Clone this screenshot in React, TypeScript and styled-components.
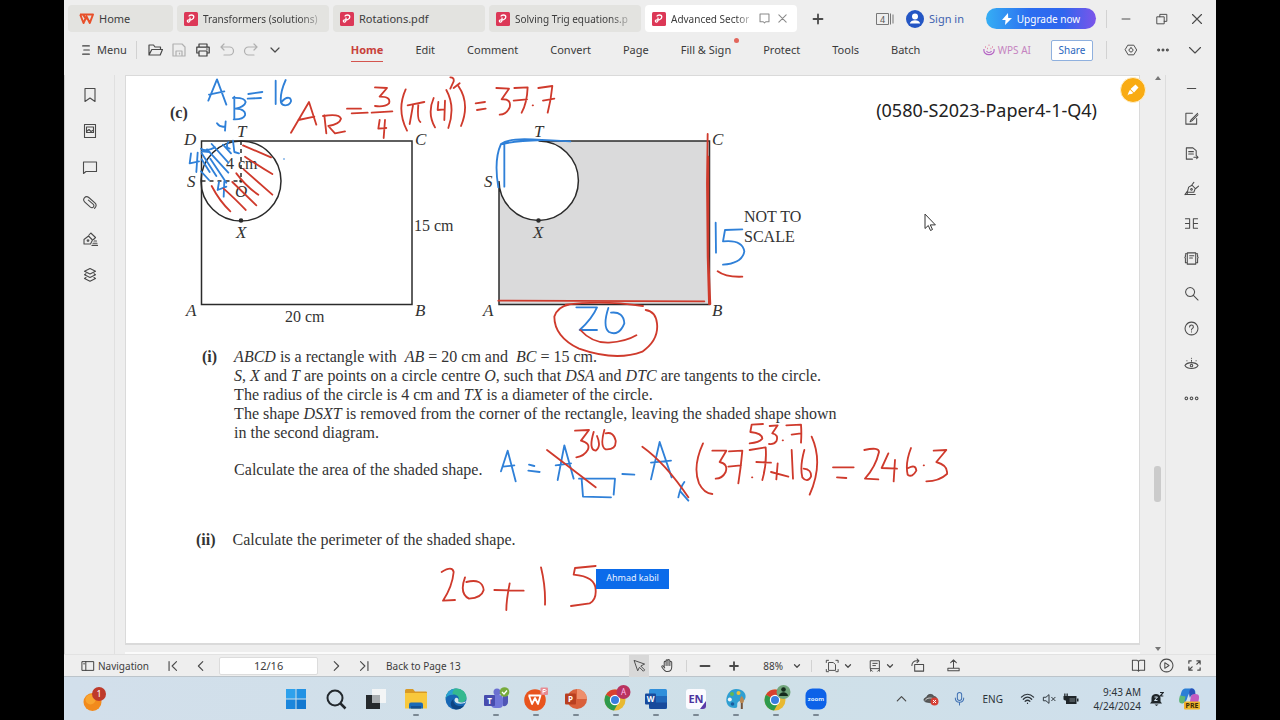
import React from "react";
import styled, { createGlobalStyle, css } from "styled-components";

const UI = `"Noto Sans", "Open Sans", sans-serif`;
const SERIF = `"Liberation Serif", "Times New Roman", serif`;
const BLUE = "#2f80d8";
const RED = "#cf3a2c";

const GlobalStyle = createGlobalStyle`
  *, *::before, *::after { box-sizing: border-box; }
  body { margin: 0; background: #000; font-family: ${UI}; font-size: 11px; color: #3c3c3c; }
  button, input { font: inherit; color: inherit; }
  a { color: inherit; text-decoration: none; }
  svg { display: block; flex: none; }
`;

/* ---------- shell ---------- */

const Screen = styled.div`
  min-height: 100vh;
  padding: 0 5%;
  display: flex;
`;

const Desktop = styled.div`
  flex: 1;
  min-width: 0;
  display: flex;
  flex-direction: column;
  background: #eeeeee;
  overflow: hidden;
`;

const Spacer = styled.div`
  flex: 1;
`;

const Divider = styled.span<{ $tall?: boolean }>`
  width: 1px;
  height: ${(p) => (p.$tall ? 18 : 12)}px;
  background: #d2d2d2;
`;

const IconButton = styled.button<{ $w?: number; $active?: boolean; $tone?: string }>`
  width: ${(p) => p.$w ?? 24}px;
  height: 22px;
  padding: 0;
  border: 0;
  flex: none;
  display: flex;
  align-items: center;
  justify-content: center;
  background: ${(p) => (p.$active ? "#d8d8d8" : "transparent")};
  color: ${(p) => p.$tone ?? "#4a4a4a"};
`;

/* ---------- tab strip ---------- */

const TabStrip = styled.header`
  display: flex;
  align-items: center;
  height: 37px;
  padding: 0 1px 0 4px;
`;

const Tabs = styled.nav`
  display: flex;
  gap: 4px;
`;

const Tab = styled.div<{ $w: number; $active?: boolean }>`
  display: flex;
  align-items: center;
  width: ${(p) => p.$w}px;
  height: 27px;
  border-radius: 4px;
  background: ${(p) => (p.$active ? "#ffffff" : "#e3e3e0")};
`;

const TabLink = styled.a<{ $lead: number }>`
  flex: 1;
  min-width: 0;
  display: flex;
  align-items: center;
  gap: 5px;
  padding: 0 0 0 ${(p) => p.$lead}px;
`;

const TabTitle = styled.span<{ $fade?: boolean }>`
  white-space: nowrap;
  font-size: ${(p) => (p.$fade ? 10 : 11)}px;
  line-height: 16px;
  ${(p) =>
    p.$fade &&
    css`
      mask-image: linear-gradient(to right, #000 84%, rgba(0, 0, 0, 0.3));
    `}
`;

const Account = styled.a`
  display: flex;
  align-items: center;
  gap: 5px;
  margin: 0 22px 0 11px;
  color: #3f62ae;
  line-height: 16px;
`;

const UpgradeButton = styled.button`
  display: flex;
  align-items: center;
  justify-content: center;
  gap: 5px;
  width: 110px;
  height: 21px;
  margin-right: 10px;
  padding: 0;
  border: 0;
  border-radius: 11px;
  color: #fff;
  font-size: 10px;
  background: linear-gradient(90deg, #35aef4 0%, #2b6df0 40%, #2f66ee 70%, #7c55ea 100%);
`;

/* ---------- ribbon ---------- */

const Ribbon = styled.div`
  display: flex;
  align-items: center;
  height: 34px;
  margin-top: -4px;
  padding: 0 5px 0 16px;
`;

const MenuButton = styled.button`
  display: flex;
  align-items: center;
  gap: 5px;
  margin-right: 9px;
  padding: 0;
  border: 0;
  background: none;
  line-height: 16px;
`;

const QuickTools = styled.div`
  display: flex;
  margin-left: 6px;
`;

const RibbonTabs = styled.nav`
  display: flex;
  gap: 32px;
  margin-left: 64px;
`;

const RibbonTab = styled.a<{ $active?: boolean; $dot?: boolean }>`
  position: relative;
  padding: 4px 0 3px;
  line-height: 16px;
  white-space: nowrap;
  font-weight: ${(p) => (p.$active ? 700 : 400)};
  color: ${(p) => (p.$active ? "#c8413b" : "#3a3a3a")};
  border-bottom: 1px solid ${(p) => (p.$active ? "#d4544e" : "transparent")};
  ${(p) =>
    p.$dot &&
    css`
      &::after {
        content: "";
        position: absolute;
        top: 0;
        right: -8px;
        width: 5px;
        height: 5px;
        border-radius: 50%;
        background: #e2665c;
      }
    `}
`;

const AiLink = styled.a`
  display: flex;
  align-items: center;
  gap: 3px;
  margin-right: 20px;
  font-size: 10px;
  color: #c583c0;
`;

const ShareButton = styled.button`
  width: 42px;
  height: 21px;
  margin-right: 13px;
  padding: 0;
  border: 1px solid #8fb0de;
  border-radius: 2px;
  background: #fff;
  color: #2a66bd;
  font-size: 10px;
`;

/* ---------- workspace ---------- */

const Workspace = styled.main`
  flex: 1;
  display: flex;
  margin-top: 8px;
`;

const LeftRail = styled.nav`
  width: 51px;
  padding-top: 9px;
  display: flex;
  flex-direction: column;
  align-items: center;
  gap: 14px;
  border-left: 1px solid #cfcfcf;
  border-right: 1px solid #e0e0e0;
`;

const RightRail = styled.nav`
  width: 51px;
  padding-top: 2px;
  display: flex;
  flex-direction: column;
  align-items: center;
  gap: 13px;
  border-left: 1px solid #dddddd;

  & > :first-child {
    margin-bottom: -5px;
  }
`;

const Viewport = styled.div`
  flex: 1;
  min-width: 0;
  display: flex;
  flex-direction: column;
  padding-left: 10px;
`;

const Sheet = styled.article`
  position: relative;
  flex: 1;
  padding: 25px 42px 8px 44px;
  background: #fff;
  border: solid #dadada;
  border-width: 1px 1px 2px;
  color: #333;
  font-family: ${SERIF};
  font-size: 16px;
  line-height: 19px;
`;

const NextSheet = styled.div`
  height: 2px;
  margin-top: 7px;
  background: #fbfbfb;
`;

const ScrollTrack = styled.div`
  width: 25px;
  padding: 1px 4px 3px 14px;
  display: grid;
  grid-template-rows: 4px 385fr 36px 145fr 4px;
  justify-items: center;
`;

const ScrollThumb = styled.span`
  grid-row: 3;
  width: 7px;
  border-radius: 3px;
  background: #cbcbcb;
`;

const ScrollArrow = styled.span<{ $down?: boolean }>`
  grid-row: ${(p) => (p.$down ? 5 : 1)};
  border: 3px solid transparent;
  border-top: ${(p) => (p.$down ? "4px solid #777" : "0")};
  border-bottom: ${(p) => (p.$down ? "0" : "4px solid #777")};
  width: 0;
  height: 4px;
`;

/* ---------- exam paper ---------- */

const PaperHead = styled.div`
  display: flex;
  justify-content: space-between;
  align-items: center;
  height: 22px;
`;

const PartLabel = styled.strong`
  font-weight: 700;
`;

const PaperRef = styled.span`
  font-family: ${UI};
  font-size: 18px;
  line-height: 18px;
  padding-bottom: 4px;
  color: #222;
`;

const Figures = styled.div`
  display: flex;
  gap: 16px;
  padding-left: 13px;
`;

const ScaleNote = styled.p`
  margin: 84px 0 0;
  line-height: 20px;
`;

const SubPart = styled.section<{ $lead: number; $top: number }>`
  display: flex;
  gap: 17px;
  margin: ${(p) => p.$top}px 0 0 ${(p) => p.$lead}px;
  white-space: nowrap;
`;

const Paragraph = styled.p`
  margin: 0 0 18px;
`;

const InkLayer = styled.svg`
  position: absolute;
  left: -1px;
  top: -1px;
  pointer-events: none;
`;

const NameTag = styled.span`
  position: absolute;
  left: 470px;
  top: 493px;
  width: 73px;
  height: 20px;
  background: #0b6bea;
  color: #e8f1ff;
  font-family: ${UI};
  font-size: 9px;
  line-height: 18px;
  text-align: center;
`;

const HighlighterButton = styled.button`
  position: absolute;
  top: 1px;
  right: -7px;
  width: 26px;
  height: 26px;
  padding: 0;
  border: 1px solid #fff0cc;
  border-radius: 50%;
  display: flex;
  align-items: center;
  justify-content: center;
  background: #f9ab12;
`;

/* ---------- status bar ---------- */

const StatusBar = styled.footer`
  display: flex;
  align-items: center;
  height: 23px;
  padding: 0 8px 0 17px;
  border-top: 1px solid #e2e2e2;
  border-bottom: 1px solid #bcc4ca;
  font-size: 10px;
  white-space: nowrap;
`;

const StatusButton = styled.button`
  display: flex;
  align-items: center;
  gap: 3px;
  padding: 0;
  border: 0;
  background: none;
`;

const PageInput = styled.input`
  width: 99px;
  height: 18px;
  margin: 0 4px;
  padding: 0;
  border: 1px solid #dcdcdc;
  border-radius: 2px;
  background: #fff;
  font-size: 11px;
  text-align: center;
`;

const Group = styled.div<{ $left?: number; $right?: number }>`
  display: flex;
  align-items: center;
  margin-left: ${(p) => p.$left ?? 0}px;
  margin-right: ${(p) => p.$right ?? 0}px;
`;

/* ---------- taskbar ---------- */

const Taskbar = styled.footer`
  display: flex;
  align-items: center;
  height: 43px;
  background: linear-gradient(90deg, #d2dfeb, #cfe0e8 60%, #cfdfec);
`;

const TaskStart = styled.div`
  flex: 195 1 0;
  padding-left: 17px;
`;

const TaskApps = styled.div`
  display: flex;
`;

const TaskButton = styled.button<{ $open?: boolean }>`
  position: relative;
  display: flex;
  align-items: center;
  justify-content: center;
  width: 40px;
  height: 40px;
  padding: 0;
  border: 0;
  background: none;
  ${(p) =>
    p.$open &&
    css`
      &::after {
        content: "";
        position: absolute;
        bottom: 3px;
        width: 6px;
        height: 2px;
        border-radius: 1px;
        background: #7a8893;
      }
    `}
`;

const Tray = styled.div`
  flex: 365 1 0;
  display: flex;
  align-items: center;
  justify-content: flex-end;
  padding-right: 15px;
  color: #2c3339;
`;

const Language = styled.span`
  margin: 0 13px 0 9px;
  font-size: 10px;
`;

const Clock = styled.time`
  margin: 0 8px 0 7px;
  width: 52px;
  text-align: right;
  font-size: 10px;
  line-height: 14px;
  white-space: nowrap;
`;

/* ---------- icons ---------- */

type GlyphProps = { d: string; size?: number; w?: number; fill?: string };

const Glyph = ({ d, size = 16, w = 1.1, fill = "none" }: GlyphProps) => (
  <svg width={size} height={size} viewBox="0 0 16 16" fill={fill} stroke="currentColor" strokeWidth={w} strokeLinejoin="round" strokeLinecap="round" aria-hidden>
    <path d={d} />
  </svg>
);

const icons = {
  bars: "M3.500 2.500h9M5 8h7.500M3.500 13.500h9",
  folder: "M2 13V3h4.500l1.500 2h5.500v2.500M2 13l2.800-5.500H15.500L13.200 13z",
  save: "M2 2h9l3 3v9H2zM5 14V9h6v5M8.500 11v1",
  print: "M4 5V2h8v3M4 11H1.800V5.200h12.400V11H12M4 9h8v5H4zM11.500 7h.8",
  undo: "M5 2L2 5l3 3M2 5h8.500a4 4 0 0 1 0 8H5",
  redo: "M11 2l3 3-3 3M14 5H5.500a4 4 0 0 0 0 8H11",
  down: "M4 6l4 4 4-4",
  downWide: "M2.500 5.500L8 11l5.500-5.500",
  up: "M3.500 10.500L8 6l4.500 4.500",
  gear: "M4.800 2.500h6.400L14.500 8l-3.300 5.500H4.800L1.500 8zM8 5.700a2.300 2.300 0 1 0 .01 0z",
  minus: "M3.500 8h9",
  plus: "M3.500 8h9M8 3.500v9",
  close: "M3.500 3.500l9 9M12.500 3.500l-9 9",
  restore: "M2.500 5.500h8V13.500h-8zM5.500 5.500V2.700h8v8h-3",
  monitor: "M2.500 2.500h11v9.500H9.500L8 13.500 6.500 12h-4z",
  docs: "M1.500 3.500h9v9h-9zM12.700 3.500v9M14.700 4.500v7",
  bookmark: "M3 1.500h10v13L8 11l-5 3.500z",
  thumb: "M2.500 1.500h11v13h-11zM4.500 4h7v5.500h-7zM4.500 8.500L7 6.500l2 2 2.500-1.500",
  comment: "M1.500 3h13v9.500H4L1.500 14.500z",
  clip: "M12.500 13.300l1-1.200c1-1.500.7-3-.6-4.200L6.800 2.500C5.300 1.300 3.500 1.500 2.400 2.800c-1 1.300-1 3 .4 4.300l5.600 5c1 .8 2.300.8 3-.1.8-1 .6-2-.3-2.900L6.400 5.200",
  pen: "M2 13V8.500L6.500 5l4 4-2 4zM6 8.700a.8.800 0 1 0 .01 0zM7 4l1.800-2 4.700 4.500-2 2M12 10h2.500M11 12.200h4M10 14.400h5.500",
  layers: "M8 1.500l5.500 2.700L8 7 2.500 4.200zM4 6.800l-1.500 1L8 10.500l5.500-2.700-1.500-1M4 10.500l-1.500 1L8 14.300l5.500-2.800-1.500-1",
  editBox: "M9 2.500H2v11.500h11.500V8M14.500 2.500L7.500 9.500l-1 2 2-1L15 4",
  docExport: "M9 14H2.500V2h7l3.500 3v5M5 6h5M5 8.500h5M10.500 12h4.500M13.500 10.500L15 12l-1.500 1.500",
  signPen: "M3.500 12L5 6.500 8.500 4.500l3.500 3.500-1.500 4zM8 8a.9.900 0 1 0 .01 0zM8.500 4L10.500 1.500M12.500 8L15.500 5.500M1 14.500h11M1 14.500L3.500 11v3",
  split: "M1.500 3h4.500M1.500 8h4.500M1.500 13h4.500M6 3v10M14.500 3H10M14.500 8H10M14.500 13H10M10 3v10",
  book: "M3.500 2h9v12h-9zM6 5h4.500M6 7.500h3M1.500 4v2l-.6 1 .6 1v4.500M14.500 4v2l.6 1-.6 1v4.500M1.500 3h2M12.500 3h2M1.500 12.500h2M12.500 12.500h2",
  search: "M6.500 1.500a4.800 4.800 0 1 0 .01 0zM10 10l5 5",
  help: "M8 1.200a6.800 6.800 0 1 0 .01 0zM6 6.300c0-2.700 4-2.500 4 0C10 8 8 7.800 8 9.500M8 11.500v.3",
  eye: "M1 10.200c2.500-4.200 11.500-4.200 14 0-2.500 4.200-11.500 4.200-14 0zM8 8.900a1.300 1.300 0 1 0 .01 0zM7.900 2.500h.2M3 5h.2M12.800 5h.2M8 4.500v1",
  more: "M3 7a1 1 0 1 0 .01 0zM8 7a1 1 0 1 0 .01 0zM13 7a1 1 0 1 0 .01 0z",
  moreRings: "M2.500 6.500a1.400 1.400 0 1 0 .01 0zM8 6.500a1.400 1.400 0 1 0 .01 0zM13.500 6.500a1.400 1.400 0 1 0 .01 0z",
  panel: "M1.500 3h13v10h-13zM5.500 3v10M3 5.500h1",
  first: "M3.500 3v10M12 3L7 8l5 5",
  last: "M12.500 3v10M4 3l5 5-5 5",
  prev: "M10 3L5 8l5 5",
  next: "M6 3l5 5-5 5",
  arrow: "M2.500 2l4 11.500 2-4 4.500 4.500 1.500-1.500L10 8l4-2z",
  hand: "M4.500 9V4.500a1 1 0 0 1 2 0V3a1 1 0 0 1 2 0v-.5a1 1 0 0 1 2 .5v1.500a1 1 0 0 1 2 .5v4.500c0 3-1.500 5-4.500 5C5 14.500 3.500 12 2 9.500c-.5-1 .8-1.500 1.500-.8L5 10.500M6.500 4.500v3.500M8.500 3v5M10.500 4v4",
  fit: "M4.500 4h5l2.500 2.500V13h-7.500zM1.500 4V1.500H4M12.500 1.500H15V4M1.500 12v2.500H4M12.500 14.500H15V12",
  layout: "M3 2h10v9H3zM5.500 5h5M5.500 7.500h3M3 11v3M13 11v3M5 14l-1.500-1.500M11 14l1.500-1.500",
  rotate: "M5 7h9.500v7H5zM2 8c0-3 2-5 5.500-5H9M7.500 1L9.500 3l-2 2",
  upload: "M8 10V2M5 5l3-3 3 3M2 11h12v2.500H2z",
  reader: "M8 3.500L6.500 2.500H1.500V13h5L8 14l1.500-1h5V2.500h-5zM8 3.500V14",
  play: "M8 1.200a6.800 6.800 0 1 0 .01 0zM6.200 5v6l4.500-3z",
  expand: "M2 5.500V3h2.500M14 10.500V13h-2.500M10.500 3H14v3.500M14 3l-3.500 3.500M5.500 13H2V9.500M2 13l3.500-3.500",
  mic: "M8 1.500a2.300 2.300 0 0 0-2.300 2.300v4a2.300 2.300 0 0 0 4.600 0v-4A2.300 2.300 0 0 0 8 1.500zM3.500 7.500c0 6 9 6 9 0M8 12v3",
  wifi: "M1.500 6.500c4-4 9-4 13 0M3.500 8.800c3-3 6-3 9 0M5.500 11c2-1.800 3-1.800 5 0M8 13v.2",
  mute: "M2 6h2.500L8 3v10L4.500 10H2zM11 6l4 4M15 6l-4 4",
};

const WpsMark = ({ color = "#e8502a" }: { color?: string }) => (
  <svg width="15" height="12" viewBox="0 0 15 12" fill="none" stroke={color} strokeWidth="2" strokeLinejoin="round" aria-hidden>
    <path d="M1 1.500h13L10.800 10 7.500 3.500 4.500 10 1.200 1.500M4 1.500l3.300 5.200" />
  </svg>
);

const PdfMark = () => (
  <svg width="14" height="14" viewBox="0 0 14 14" aria-hidden>
    <rect width="14" height="14" rx="1.500" fill="#dc3857" />
    <path d="M5 4.500c0-2 4.800-2.200 4.800.5S6 8 6 8V5.500M6 8c-2.300-.6-3 .5-2.500 1.500s2.200.7 2.500-1" fill="none" stroke="#fff" strokeWidth="1.300" />
  </svg>
);

const Avatar = () => (
  <svg width="18" height="18" viewBox="0 0 18 18" aria-hidden>
    <circle cx="9" cy="9" r="9" fill="#2456c4" />
    <circle cx="9" cy="6.500" r="3" fill="#fff" />
    <path d="M3.800 13.500c.6-4.500 9.800-4.500 10.400 0z" fill="#fff" />
  </svg>
);

const Bolt = () => (
  <svg width="10" height="12" viewBox="0 0 10 12" fill="#fff" aria-hidden>
    <path d="M6 0L0 7h3.500L3 12l7-7H6.200z" />
  </svg>
);

const AiMark = () => (
  <svg width="12" height="12" viewBox="0 0 12 12" fill="none" stroke="#b565c4" strokeWidth="1.200" aria-hidden>
    <path d="M1 5C-.5 12.500 12.500 12.500 11 5M3.500 7c1 2 4 2 5 0" />
    <path d="M2 3h.8M5.600 1.200h.8M9.200 3h.8M4 4.500h.8M7.500 4.500h.8" stroke="#e07798" strokeWidth="1.500" />
  </svg>
);

const Chrome = ({ badge }: { badge: "letter" | "person" }) => (
  <svg width="30" height="30" viewBox="0 0 30 30" aria-hidden>
    <circle cx="14" cy="16" r="10.500" fill="#e8b931" />
    <path d="M14 16L4.900 10.800A10.500 10.500 0 0 1 23.100 10.800z" fill="#d8402f" />
    <path d="M14 16L4.900 10.800A10.500 10.500 0 0 0 13 26.500l4.500-8z" fill="#2e9a4d" />
    <circle cx="14" cy="16" r="5.200" fill="#fff" />
    <circle cx="14" cy="16" r="4" fill="#3a7de0" />
    {badge === "letter" ? (
      <>
        <circle cx="22.500" cy="8" r="7" fill="#b93360" />
        <text x="22.500" y="11" textAnchor="middle" fontSize="8" fontFamily="Noto Sans, sans-serif" fill="#fbe">A</text>
      </>
    ) : (
      <>
        <circle cx="22.500" cy="8" r="7" fill="#72a67c" />
        <circle cx="22.500" cy="5.500" r="2.300" fill="#152a1c" />
        <path d="M18 12c.5-5 8.500-5 9 0z" fill="#152a1c" />
      </>
    )}
  </svg>
);

const Office = ({ letter, a, b, c, round }: { letter: string; a: string; b: string; c: string; round?: boolean }) => (
  <svg width="24" height="24" viewBox="0 0 24 24" aria-hidden>
    {round ? (
      <>
        <circle cx="13" cy="12" r="10" fill={a} />
        <path d="M13 2a10 10 0 0 1 10 10H13z" fill={b} />
      </>
    ) : (
      <>
        <rect x="5" y="2" width="18" height="20" rx="1.500" fill={a} />
        <path d="M5 9h18v7H5z" fill={b} />
        <path d="M5 15.500h18V20a2 2 0 0 1-2 2H7a2 2 0 0 1-2-2z" fill={c} />
      </>
    )}
    <rect x="1" y="6.500" width="11" height="11" rx="1" fill={c} />
    <text x="6.500" y="15" textAnchor="middle" fontSize="8" fontWeight="700" fontFamily="Noto Sans, sans-serif" fill="#fff">{letter}</text>
  </svg>
);

const Start = () => (
  <svg width="22" height="22" viewBox="0 0 22 22" aria-hidden>
    <path d="M1 1h9.500v9.500H1z" fill="#2ea1ec" />
    <path d="M11.500 1H21v9.500h-9.500z" fill="#2292e4" />
    <path d="M1 11.500h9.500V21H1z" fill="#1b86dc" />
    <path d="M11.500 11.500H21V21h-9.500z" fill="#1278d0" />
  </svg>
);

const TaskSearch = () => (
  <svg width="22" height="22" viewBox="0 0 22 22" fill="none" stroke="#22282d" aria-hidden>
    <circle cx="10" cy="10" r="7.500" strokeWidth="2" />
    <path d="M15.500 15.500l5 5" strokeWidth="2.500" />
  </svg>
);

const TaskView = () => (
  <svg width="22" height="22" viewBox="0 0 22 22" aria-hidden>
    <path d="M1 7h14v14H1z" fill="#25292c" />
    <path d="M7 1h14v14H7z" fill="#f3f5f6" />
    <path d="M7 7h8v8H7z" fill="#a9aeb1" />
  </svg>
);

const Explorer = () => (
  <svg width="24" height="24" viewBox="0 0 24 24" aria-hidden>
    <path d="M1 3.500q0-1.500 1.500-1.500H9l2 2.500h11q1 0 1 1V12H1z" fill="#d99a25" />
    <path d="M1 6h22v15.500H1z" fill="#f8c83c" />
    <path d="M5 21.500v-4q0-2 2-2h10q2 0 2 2v4z" fill="#1b6bb8" />
    <path d="M7 19h10v2.500H7z" fill="#134f91" />
  </svg>
);

const Edge = () => (
  <svg width="24" height="24" viewBox="0 0 24 24" aria-hidden>
    <circle cx="12" cy="12" r="10.500" fill="#1767b5" />
    <path d="M1.500 11.500C2.500 4 8 1.500 12.500 1.500c6 0 10 4.500 10 9 0 3.500-3 5-5.500 5-2 0-3.500-.8-2.700-2C16 10 13 7.500 9.500 7.500c-4 0-7 1.500-8 4z" fill="#35b98f" />
    <path d="M1.500 11.500C2.500 5 7 2 11 2c-3 2-3 5-1.500 5.500-4 0-7 1.500-8 4z" fill="#2a9fd6" />
    <path d="M9.500 12c-1 5 4 8.500 10.500 6.500-2 3-5 4-8 4-5-1-7.500-7-2.500-10.500z" fill="#0d4584" />
    <path d="M11.500 11c-3 3 1 7.500 9.500 5l1-2c-4 2.500-8.500 1.500-7.700-.5.800-1.500-1.300-3.500-2.800-2.500z" fill="#d5e7ee" />
  </svg>
);

const Teams = () => (
  <svg width="28" height="26" viewBox="0 0 28 26" aria-hidden>
    <circle cx="15" cy="6" r="3.500" fill="#6a6fd0" />
    <rect x="9" y="9" width="12" height="13" rx="4" fill="#6f76d8" />
    <path d="M21 10h5v6a4 4 0 0 1-5 4z" fill="#4f55b5" />
    <rect x="2" y="9" width="11" height="11" rx="1" fill="#474cae" />
    <text x="7.500" y="17.500" textAnchor="middle" fontSize="8" fontWeight="700" fontFamily="Noto Sans, sans-serif" fill="#fff">T</text>
    <circle cx="22.500" cy="6" r="4.800" fill="#77ab3c" />
    <path d="M20 6l2 2 3-3.500" fill="none" stroke="#fff" strokeWidth="1.300" />
  </svg>
);

const WpsApp = () => (
  <svg width="26" height="26" viewBox="0 0 26 26" aria-hidden>
    <circle cx="12" cy="14" r="10.800" fill="#e8541d" />
    <path d="M5.500 9.500h12L15 18l-3-6-3 6-3-8.500" fill="none" stroke="#fff" strokeWidth="1.800" strokeLinejoin="round" />
    <rect x="17.500" y="1.500" width="7.500" height="7.500" rx="1" fill="#e88b92" />
    <path d="M20 7.500V3.500q3-.5 3 1t-3 1" fill="none" stroke="#fff" />
  </svg>
);

const EnApp = () => (
  <svg width="24" height="24" viewBox="0 0 24 24" aria-hidden>
    <rect x="2" y="2" width="20" height="20" rx="3" fill="#fbfbff" />
    <path d="M22 14v5a3 3 0 0 1-3 3h-3z" fill="#5a3aa8" />
    <text x="12" y="15.500" textAnchor="middle" fontSize="11" fontWeight="700" fontFamily="Noto Sans, sans-serif" fill="#4c35a0">EN</text>
  </svg>
);

const Paint = () => (
  <svg width="24" height="24" viewBox="0 0 24 24" aria-hidden>
    <path d="M12 2C20 2 23 8 21 12c-1.500 3-5 1-7 3-2 2.500 1 6-3 6C4 21 1.500 16 2.500 11 3.500 6 7 2 12 2z" fill="#2f9fd2" />
    <circle cx="8" cy="7" r="2" fill="#62b955" />
    <circle cx="14.500" cy="6" r="2" fill="#ecc13c" />
    <circle cx="5.800" cy="12.500" r="2" fill="#f0f5f6" />
    <circle cx="8.500" cy="17" r="1.800" fill="#1a5d9f" />
    <path d="M17.500 9c3 3 3 5 1.500 7h-2.500c-1.500-2-.5-5 1-7z" fill="#b98852" />
    <path d="M16.800 16h2v6h-2z" fill="#75543b" />
  </svg>
);

const ZoomApp = () => (
  <svg width="24" height="24" viewBox="0 0 24 24" aria-hidden>
    <rect x="1.500" y="1.500" width="21" height="21" rx="7" fill="#0d62e8" />
    <text x="12" y="14" textAnchor="middle" fontSize="6" fontWeight="700" fontFamily="Noto Sans, sans-serif" fill="#dcebff">zoom</text>
  </svg>
);

const Weather = () => (
  <svg width="26" height="28" viewBox="0 0 26 28" aria-hidden>
    <circle cx="11.500" cy="17" r="9" fill="#f28a1c" />
    <circle cx="9.500" cy="14.500" r="5" fill="#f9a42f" />
    <circle cx="18" cy="9" r="7" fill="#be3a2b" />
    <text x="18" y="12" textAnchor="middle" fontSize="9" fontFamily="Noto Sans, sans-serif" fill="#fff">1</text>
  </svg>
);

const CloudError = () => (
  <svg width="16" height="14" viewBox="0 0 16 14" aria-hidden>
    <path d="M3 10C-.5 9 1 5.500 3.500 5.500 4.500 1.500 9.500 1.500 11 4.500c2 0 3 1.500 3 3L9 11z" fill="#5a5a5a" stroke="#333" strokeWidth=".6" />
    <path d="M2 8.500C4 5.500 8 5.500 11 7" fill="none" stroke="#ccc" />
    <circle cx="11.500" cy="9.500" r="4" fill="#d64036" />
    <path d="M10 8l3 3M13 8l-3 3" stroke="#fff" />
  </svg>
);

const Battery = () => (
  <svg width="16" height="12" viewBox="0 0 16 12" fill="#1f2529" aria-hidden>
    <path d="M3 3h10.500v8H3zM14 5.500h1.500v3H14zM.5 3h5v3.500l-1.500 1H2L.5 6.500zM1.200.600h1.300V3H1.200zM3.500.600h1.300V3H3.500z" />
    <path d="M6.500 5h5.500v4H6.500z" fill="#4b5358" />
  </svg>
);

const Bell = () => (
  <svg width="14" height="16" viewBox="0 0 14 16" aria-hidden>
    <path d="M0 12.500L1.500 10.500V7c0-5.500 9-5.500 9 0v3.500l1.500 2zM4.500 13.500h4L6.500 15z" fill="#1f2529" />
    <path d="M10 1.500h3.300l-3 3.500h3" fill="none" stroke="#1f2529" strokeWidth="1.200" />
    <path d="M4.500 6h3l-3 3.500h3" fill="none" stroke="#cfdfec" />
  </svg>
);

const Copilot = () => (
  <svg width="24" height="24" viewBox="0 0 24 24" aria-hidden>
    <path d="M9 1.500h6c2.500 0 3 2 3.500 4h-5c-3 0-3 10.500-7 10.500-4.500 0-4-4-3-7.500C4.500 4 5.500 1.500 9 1.500z" fill="#2b7fd6" />
    <path d="M3 8.500l5.500 1-1 4.500c-.6 2-1.200 2.500-2.500 2.500-4 0-3-4.500-2-8z" fill="#5fb877" />
    <path d="M16 7h2.500c4 0 4 3 3.200 6-1 4-2 7.500-6 7.500H10c4 0 2.500-13.500 6-13.500z" fill="#c35bc0" />
    <path d="M14 1.500c3 0 3.800 2 4.500 5.500-3.500 0-4.500 1-5.500 4-1-3-1.500-7.500 1-9.500z" fill="#2a50b8" />
    <rect x="7" y="14.500" width="16" height="8" rx="1" fill="#f0b52c" />
    <text x="15" y="21" textAnchor="middle" fontSize="7" fontWeight="700" fontFamily="Noto Sans, sans-serif" fill="#3b2a08">PRE</text>
  </svg>
);

/* ---------- figures ---------- */

const FigureText = styled.text<{ $upright?: boolean }>`
  font-family: ${SERIF};
  font-size: ${(p) => (p.$upright ? 16 : 17)}px;
  font-style: ${(p) => (p.$upright ? "normal" : "italic")};
  fill: #333;
`;

const FigureOne = () => (
  <svg width="280" height="204" viewBox="183 123 280 204" fill="none" stroke="#2b2b2b" strokeWidth="1.500" role="img" aria-label="Rectangle ABCD with circle centre O">
    <rect x="201.500" y="141" width="210.500" height="163.500" />
    <circle cx="241" cy="181" r="40" />
    <path d="M241 141v40M201.500 181H241" strokeDasharray="4 4" />
    <circle cx="241" cy="220.500" r="1.500" fill="#2b2b2b" />
    <circle cx="241" cy="181" r="1" fill="#2b2b2b" />
    <g stroke="none">
      <FigureText x="184" y="145">D</FigureText>
      <FigureText x="237" y="137">T</FigureText>
      <FigureText x="415" y="145">C</FigureText>
      <FigureText x="187" y="187">S</FigureText>
      <FigureText x="236" y="238">X</FigureText>
      <FigureText x="235" y="197">O</FigureText>
      <FigureText x="186" y="316">A</FigureText>
      <FigureText x="415" y="316">B</FigureText>
      <FigureText $upright x="226" y="169">4 cm</FigureText>
      <FigureText $upright x="414" y="231">15 cm</FigureText>
      <FigureText $upright x="285" y="322">20 cm</FigureText>
    </g>
  </svg>
);

const FigureTwo = () => (
  <svg width="249" height="204" viewBox="479 123 249 204" fill="none" stroke="#2b2b2b" strokeWidth="1.500" role="img" aria-label="Shaded shape">
    <path d="M538.500 141H709.500V304.500H499V181A39.700 39.700 0 1 0 538.500 141z" fill="#dadadb" />
    <circle cx="538.500" cy="220.500" r="1.500" fill="#2b2b2b" />
    <g stroke="none">
      <FigureText x="534" y="137">T</FigureText>
      <FigureText x="712" y="145">C</FigureText>
      <FigureText x="484" y="187">S</FigureText>
      <FigureText x="533" y="238">X</FigureText>
      <FigureText x="483" y="316">A</FigureText>
      <FigureText x="712" y="316">B</FigureText>
    </g>
  </svg>
);

/* Pen strokes are stored at triple size, one group for each written area. */
const inkGroups = [
  {
    at: "translate(64 70) scale(.33333)",
    blue: [
      "M436 92L462 28L490 104M438 74L484 64",
      "M514 80L514 146M510 84Q545 82 548 96Q545 110 518 116Q550 118 546 136Q540 149 512 148",
      "M556 72L598 66M554 86L594 84",
      "M638 32L638 102M668 30Q650 70 654 98Q660 110 676 104Q690 94 680 84Q668 80 656 96",
      "M462 160Q470 172 484 170M488 154L486 182",
      "M384 250L380 280L408 274M404 248L400 306",
      "M414 236Q430 246 456 232M416 244L440 246M446 222L496 278M432 238L496 308M416 250L460 318M416 268L440 306M414 304L438 330M442 266L490 338",
      "M480 224L504 250M496 216Q486 232 500 236M510 212L514 246L528 250",
      "M468 336L464 360L490 350M484 334L482 380",
    ],
    red: [
      "M684 188L738 96L760 164M706 150L754 140",
      "M784 136L790 190M780 138Q830 130 834 146Q830 162 796 168L816 190L846 184",
      "M852 116L894 116M866 130L914 128",
      "M936 52L972 54L950 80Q985 80 978 100Q965 112 936 108M926 128L988 124M950 150L946 176L970 174M966 150L962 204",
      "M1028 58Q1000 120 1032 182M1034 106L1084 96M1050 106L1040 162M1066 104Q1062 150 1072 156",
      "M1112 84Q1092 130 1116 172M1126 96L1124 120L1144 118M1146 92L1144 150M1150 60Q1178 110 1156 174",
      "M1162 22Q1174 22 1172 34L1162 56M1172 54L1190 40",
      "M540 226L624 262M546 260Q590 290 628 312M542 298L628 374M520 310Q550 350 586 374M508 336L580 406M482 356Q520 390 548 420M446 348Q470 394 502 424",
    ],
  },
  {
    at: "translate(460 70) scale(.33333)",
    blue: [
      "M118 352Q104 270 126 222Q150 204 220 208L334 214M136 222L136 350M130 222Q170 212 250 210",
      "M770 458L771 548M850 478L798 480L792 514Q850 508 856 544Q850 580 792 584",
      "M352 712L414 712Q400 745 362 780L414 780M448 714Q430 770 450 786Q480 800 496 760Q494 724 456 728",
    ],
    red: [
      "M-2 48Q34 100 6 168M50 100L78 96M54 120L80 116",
      "M112 54L150 56L128 88Q158 86 152 112Q142 134 122 134M166 54L206 52Q204 100 188 128M164 92L204 88M221 106L222 106M238 54L280 48Q276 90 266 128M252 92L286 86",
      "M746 192L744 340L746 560L750 702M748 260L748 560L754 702M118 692L736 694M320 704Q430 690 552 708",
      "M776 604Q800 622 850 620M364 780Q400 820 450 818Q500 815 532 796",
      "M330 704Q296 710 286 740Q286 800 360 836Q470 875 550 845Q600 810 594 760Q590 724 560 720",
    ],
  },
  {
    at: "translate(480 400) scale(.33333)",
    blue: [
      "M66 214L86 152L110 244M72 200L106 196M150 194L166 198M148 212L182 216",
      "M236 240L256 136L284 236M230 196L276 190M300 236L408 236L404 284M308 238L312 290L396 292",
      "M430 222L466 224M516 238L542 126L578 232M516 188L576 182M598 292Q604 262 616 246M604 274L628 302",
    ],
    red: [
      "M204 150L350 262M490 140Q560 190 628 292",
      "M288 92L330 90L306 122Q336 130 326 150Q316 168 292 172M344 96Q328 150 350 152Q368 140 354 108M376 90Q362 140 380 148Q412 150 410 122Q404 94 380 100",
      "M672 130Q640 200 660 250Q675 280 700 282M700 152L742 152L722 186Q748 192 740 216Q730 236 710 236M750 154L790 152Q786 200 778 250M748 200L786 196M819 232L820 232",
      "M812 150L860 142Q864 190 850 240M832 186L876 188M896 190L892 238M876 216L928 230M938 150L942 236M976 150Q962 200 970 232Q985 250 996 230Q998 208 974 206M998 110Q1034 190 992 284",
      "M1062 202L1124 202M1074 232L1102 234M1156 150Q1200 140 1200 156Q1190 200 1158 236L1198 238M1228 160L1208 204L1254 206M1248 180L1244 244",
      "M1296 144Q1278 190 1286 224Q1300 234 1312 212Q1310 192 1288 204M1334 196L1335 196M1364 152L1402 150L1372 186Q1408 196 1404 222Q1380 244 1342 244",
      "M852 72L818 74L814 96Q850 100 850 116Q840 128 812 130M872 78L896 76L880 100Q900 104 892 124Q885 134 870 132M911 121L912 121M922 76L966 74Q968 100 966 128M938 104L966 100",
      "M-112 516Q-80 496 -76 516Q-80 560 -108 602L-72 600M-42 532Q-60 580 -30 596Q8 594 14 570Q10 534 -38 546",
      "M46 570L134 572M92 550Q82 600 82 630M186 502Q200 560 198 614M350 498L288 504L284 524Q350 530 350 570Q352 600 332 610L276 618",
    ],
  },
];

const Ink = () => (
  <InkLayer width="1014" height="570" viewBox="126 75 1014 570" fill="none" strokeLinecap="round" strokeLinejoin="round" role="img" aria-label="Handwritten working">
    {inkGroups.map((group) => (
      <g key={group.at} transform={group.at} strokeWidth="5.500">
        <path d={group.blue.join("")} stroke={BLUE} />
        <path d={group.red.join("")} stroke={RED} />
      </g>
    ))}
    <circle cx="285" cy="159" r=".8" fill={BLUE} />
    <path d="M926 214.500v14l3.300-3 2.200 5 2-1-2.200-4.600h4.700z" fill="#fff" stroke="#333" />
  </InkLayer>
);

/* ---------- page ---------- */

const fileTabs = ["Transformers (solutions)", "Rotations.pdf", "Solving Trig equations.p"];
const ribbonTabs = ["Home", "Edit", "Comment", "Convert", "Page", "Fill & Sign", "Protect", "Tools", "Batch"];

const quickTools = [
  ["Open", icons.folder, "#4a4a4a"],
  ["Save", icons.save, "#b0b0b0"],
  ["Print", icons.print, "#3c3c3c"],
  ["Undo", icons.undo, "#b0b0b0"],
  ["Redo", icons.redo, "#b0b0b0"],
  ["More tools", icons.down, "#4a4a4a"],
];

const leftTools = [
  ["Bookmarks", icons.bookmark],
  ["Thumbnails", icons.thumb],
  ["Comments", icons.comment],
  ["Attachments", icons.clip],
  ["Signatures", icons.pen],
  ["Layers", icons.layers],
];

const rightTools = [
  ["Collapse", icons.minus],
  ["Edit", icons.editBox],
  ["Export", icons.docExport],
  ["Sign", icons.signPen],
  ["Compare", icons.split],
  ["Read", icons.book],
  ["Search", icons.search],
  ["Help", icons.help],
  ["Eye care", icons.eye],
  ["More", icons.moreRings],
];

const apps: [string, React.ReactNode, boolean][] = [
  ["Start", <Start />, false],
  ["Search", <TaskSearch />, false],
  ["Task view", <TaskView />, false],
  ["File Explorer", <Explorer />, true],
  ["Edge", <Edge />, false],
  ["Teams", <Teams />, true],
  ["WPS", <WpsApp />, true],
  ["PowerPoint", <Office letter="P" a="#d9603b" b="#ee8f6c" c="#b93f20" round />, true],
  ["Chrome", <Chrome badge="letter" />, true],
  ["Word", <Office letter="W" a="#2f8fdb" b="#2068bb" c="#174a9c" />, true],
  ["EN", <EnApp />, true],
  ["Paint", <Paint />, true],
  ["Chrome profile", <Chrome badge="person" />, true],
  ["Zoom", <ZoomApp />, true],
];

export default function App() {
  return (
    <Screen>
      <GlobalStyle />
      <Desktop>
        <TabStrip>
          <Tabs>
            <Tab $w={105}>
              <TabLink $lead={11} href="#home">
                <WpsMark />
                <TabTitle>Home</TabTitle>
              </TabLink>
            </Tab>
            {fileTabs.map((name) => (
              <Tab key={name} $w={152}>
                <TabLink $lead={7} href="#file">
                  <PdfMark />
                  <TabTitle $fade={name !== "Rotations.pdf"}>{name}</TabTitle>
                </TabLink>
              </Tab>
            ))}
            <Tab $w={152} $active>
              <TabLink $lead={7} href="#file">
                <PdfMark />
                <TabTitle $fade>Advanced Sector</TabTitle>
              </TabLink>
              <Group $right={6}>
                <IconButton $w={18} $tone="#8a8a8a" aria-label="Present">
                  <Glyph d={icons.monitor} size={13} w={1.3} />
                </IconButton>
                <IconButton $w={18} $tone="#8a8a8a" aria-label="Close tab">
                  <Glyph d={icons.close} size={13} w={1.3} />
                </IconButton>
              </Group>
            </Tab>
          </Tabs>
          <Group $left={9}>
            <IconButton aria-label="New tab">
              <Glyph d={icons.plus} w={1.8} />
            </IconButton>
          </Group>
          <Spacer />
          <svg width="20" height="14" viewBox="0 0 20 14" fill="none" stroke="#777" aria-label="4 documents">
            <path d="M1.500 1.500h12v11h-12zM15.500 1.500v11M18 2.500v9" />
            <text x="7.500" y="10.500" textAnchor="middle" fontSize="9" fontFamily="Noto Sans, sans-serif" fill="#555" stroke="none">4</text>
          </svg>
          <Account href="#account">
            <Avatar />
            Sign in
          </Account>
          <UpgradeButton>
            <Bolt />
            Upgrade now
          </UpgradeButton>
          <Divider $tall />
          <IconButton $w={38} aria-label="Minimize"><Glyph d={icons.minus} size={14} /></IconButton>
          <IconButton $w={34} aria-label="Restore"><Glyph d={icons.restore} size={14} /></IconButton>
          <IconButton $w={36} aria-label="Close"><Glyph d={icons.close} /></IconButton>
        </TabStrip>

        <Ribbon>
          <MenuButton>
            <Glyph d={icons.bars} size={12} w={1.4} />
            Menu
          </MenuButton>
          <Divider $tall />
          <QuickTools>
            {quickTools.map(([name, d, tone]) => (
              <IconButton key={name} $tone={tone} aria-label={name}>
                <Glyph d={d} w={1.2} />
              </IconButton>
            ))}
          </QuickTools>
          <RibbonTabs>
            {ribbonTabs.map((name, i) => (
              <RibbonTab key={name} href="#tab" $active={i === 0} $dot={name === "Fill & Sign"}>
                {name}
              </RibbonTab>
            ))}
          </RibbonTabs>
          <Spacer />
          <AiLink href="#ai">
            <AiMark />
            WPS AI
          </AiLink>
          <ShareButton>Share</ShareButton>
          <Divider $tall />
          <Group $left={8}>
            <IconButton $w={32} aria-label="Settings"><Glyph d={icons.gear} size={14} /></IconButton>
            <IconButton $w={32} aria-label="More"><Glyph d={icons.more} size={14} w={1.4} /></IconButton>
            <IconButton $w={32} aria-label="Collapse ribbon"><Glyph d={icons.downWide} /></IconButton>
          </Group>
        </Ribbon>

        <Workspace>
          <LeftRail>
            {leftTools.map(([name, d]) => (
              <IconButton key={name} aria-label={name}>
                <Glyph d={d} />
              </IconButton>
            ))}
          </LeftRail>
          <Viewport>
            <Sheet>
              <PaperHead>
                <PartLabel>(c)</PartLabel>
                <PaperRef>(0580-S2023-Paper4-1-Q4)</PaperRef>
              </PaperHead>
              <Figures>
                <FigureOne />
                <FigureTwo />
                <ScaleNote>
                  NOT TO
                  <br />
                  SCALE
                </ScaleNote>
              </Figures>
              <SubPart $lead={32} $top={20}>
                <PartLabel>(i)</PartLabel>
                <div>
                  <Paragraph>
                    <i>ABCD</i> is a rectangle with&nbsp; <i>AB</i> = 20 cm and&nbsp; <i>BC</i> = 15 cm.
                    <br />
                    <i>S</i>, <i>X</i> and <i>T</i> are points on a circle centre <i>O</i>, such that <i>DSA</i> and <i>DTC</i> are tangents to the circle.
                    <br />
                    The radius of the circle is 4 cm and <i>TX</i> is a diameter of the circle.
                    <br />
                    The shape <i>DSXT</i> is removed from the corner of the rectangle, leaving the shaded shape shown
                    <br />
                    in the second diagram.
                  </Paragraph>
                  <Paragraph>Calculate the area of the shaded shape.</Paragraph>
                </div>
              </SubPart>
              <SubPart $lead={26} $top={33}>
                <PartLabel>(ii)</PartLabel>
                <Paragraph>Calculate the perimeter of the shaded shape.</Paragraph>
              </SubPart>
              <Ink />
              <NameTag>Ahmad kabil</NameTag>
              <HighlighterButton aria-label="Highlighter">
                <svg width="14" height="14" viewBox="0 0 14 14" fill="#fff" aria-hidden>
                  <path d="M9.500 1.500l3 3-4.500 5-3.500-3.500zM4 6.700L7.300 10l-1.800 1-2.500.3L1.500 12.500l1-3z" />
                </svg>
              </HighlighterButton>
            </Sheet>
            <NextSheet />
          </Viewport>
          <ScrollTrack>
            <ScrollArrow />
            <ScrollThumb />
            <ScrollArrow $down />
          </ScrollTrack>
          <RightRail>
            {rightTools.map(([name, d]) => (
              <IconButton key={name} aria-label={name}>
                <Glyph d={d} size={15} />
              </IconButton>
            ))}
          </RightRail>
        </Workspace>

        <StatusBar>
          <StatusButton>
            <Glyph d={icons.panel} size={14} />
            Navigation
          </StatusButton>
          <Group $left={10}>
            <IconButton $w={28} aria-label="First page"><Glyph d={icons.first} size={14} w={1.3} /></IconButton>
            <IconButton $w={28} aria-label="Previous page"><Glyph d={icons.prev} size={14} w={1.3} /></IconButton>
            <PageInput aria-label="Page" defaultValue="12/16" />
            <IconButton $w={28} aria-label="Next page"><Glyph d={icons.next} size={14} w={1.3} /></IconButton>
            <IconButton $w={28} aria-label="Last page"><Glyph d={icons.last} size={14} w={1.3} /></IconButton>
          </Group>
          <Group $left={8}>
            <StatusButton>Back to Page 13</StatusButton>
          </Group>
          <Spacer />
          <Group $right={157}>
            <IconButton $w={20} $active aria-label="Select"><Glyph d={icons.arrow} size={14} /></IconButton>
            <IconButton $w={37} aria-label="Hand"><Glyph d={icons.hand} size={15} /></IconButton>
            <Divider />
            <IconButton $w={36} aria-label="Zoom out"><Glyph d={icons.minus} w={1.9} /></IconButton>
            <IconButton $w={22} aria-label="Zoom in"><Glyph d={icons.plus} size={14} w={2.1} /></IconButton>
            <Group $left={18}>
              <StatusButton>88%</StatusButton>
            </Group>
            <IconButton $w={28} aria-label="Zoom levels"><Glyph d={icons.down} size={10} w={2} /></IconButton>
            <Divider />
            <Group $left={10}>
              <IconButton $w={20} aria-label="Fit"><Glyph d={icons.fit} size={14} /></IconButton>
              <IconButton $w={12} aria-label="Fit options"><Glyph d={icons.down} size={10} w={2} /></IconButton>
            </Group>
            <Group $left={11}>
              <IconButton $w={20} aria-label="Layout"><Glyph d={icons.layout} size={14} /></IconButton>
              <IconButton $w={10} aria-label="Layout options"><Glyph d={icons.down} size={10} w={2} /></IconButton>
            </Group>
            <IconButton $w={44} aria-label="Rotate"><Glyph d={icons.rotate} size={15} /></IconButton>
            <IconButton $w={28} aria-label="Export"><Glyph d={icons.upload} size={15} /></IconButton>
          </Group>
          <Group>
            <IconButton $w={28} aria-label="Reader"><Glyph d={icons.reader} size={15} /></IconButton>
            <IconButton $w={28} aria-label="Play"><Glyph d={icons.play} size={15} /></IconButton>
            <IconButton $w={28} aria-label="Full screen"><Glyph d={icons.expand} size={15} w={1.3} /></IconButton>
          </Group>
        </StatusBar>

        <Taskbar>
          <TaskStart>
            <IconButton $w={26} aria-label="Widgets"><Weather /></IconButton>
          </TaskStart>
          <TaskApps>
            {apps.map(([name, icon, open]) => (
              <TaskButton key={name} $open={open} aria-label={name}>
                {icon}
              </TaskButton>
            ))}
          </TaskApps>
          <Tray>
            <IconButton $w={28} aria-label="Hidden icons"><Glyph d={icons.up} size={15} w={1.3} /></IconButton>
            <IconButton $w={30} aria-label="Cloud error"><CloudError /></IconButton>
            <IconButton $w={28} $tone="#4272b4" aria-label="Microphone"><Glyph d={icons.mic} size={15} /></IconButton>
            <Language>ENG</Language>
            <IconButton $w={22} $tone="#2c3339" aria-label="Network"><Glyph d={icons.wifi} size={15} w={1.3} /></IconButton>
            <IconButton $w={22} $tone="#2c3339" aria-label="Volume"><Glyph d={icons.mute} size={14} /></IconButton>
            <IconButton $w={22} aria-label="Battery"><Battery /></IconButton>
            <Clock>
              9:43 AM
              <br />
              4/24/2024
            </Clock>
            <IconButton $w={16} aria-label="Notifications"><Bell /></IconButton>
            <Group $left={12}>
              <IconButton aria-label="Copilot"><Copilot /></IconButton>
            </Group>
          </Tray>
        </Taskbar>
      </Desktop>
    </Screen>
  );
}
